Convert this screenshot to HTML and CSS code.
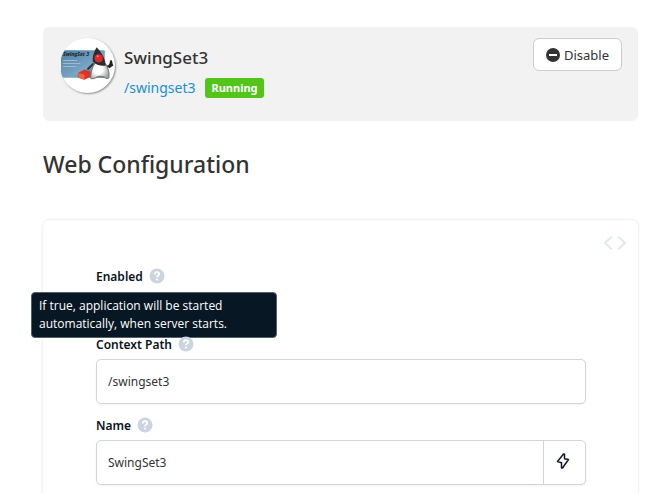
FILE: index.html
```
<!DOCTYPE html>
<html lang="en">
<head>
    <meta charset="UTF-8">
    <meta name="viewport" content="width=device-width, initial-scale=1.0">
    <title>SwingSet3 - Web Configuration</title>
    <link rel="stylesheet" href="styles.css">
</head>
<body>
    <!-- Application banner -->
    <header class="app-banner">
        <svg class="app-logo" viewBox="0 0 54 54" aria-hidden="true">
            <defs>
                <linearGradient id="cardBlue" x1="0" y1="0" x2="1" y2="1">
                    <stop offset="0" stop-color="#4a7da4"/>
                    <stop offset="0.6" stop-color="#7ba6c4"/>
                    <stop offset="1" stop-color="#3f6f95"/>
                </linearGradient>
                <radialGradient id="belly" cx="0.4" cy="0.5" r="0.6">
                    <stop offset="0.4" stop-color="#ffffff"/>
                    <stop offset="1" stop-color="#a5a5a5"/>
                </radialGradient>
            </defs>
            <rect x="1" y="12" width="43" height="27" rx="1" fill="url(#cardBlue)"/>
            <text class="logo-title" x="3" y="18">SwingSet 3</text>
            <path d="M3 22h14M3 25h17M3 28h13" stroke="#9dbdd2" stroke-width="1"/>
            <path d="M18 34l6-3 6 2v5l-6 3-6-2z" fill="#d9362b"/>
            <path d="M18 34l6 2v5l-6-2z" fill="#f0604c"/>
            <path d="M46 28q4 0 4-6M50 22l1 5M48 29l4-3" stroke="#222" stroke-width="2" fill="none"/>
            <path d="M33 25q-4 4-6 6" stroke="#333" stroke-width="2"/>
            <path d="M30 39q1-13 7-17 8 0 10 8 2 5 1 9-2 2-5-1-5-1-8 1-4 2-5 0z" fill="url(#belly)" stroke="#777" stroke-width="1"/>
            <path d="M36 9q-4 6-4 14 5 5 13 4-1-10-9-18z" fill="#2d2d30"/>
            <circle cx="38" cy="20" r="4" fill="#e5282c"/>
            <circle cx="37" cy="18" r="1" fill="#ff8078"/>
        </svg>
        <div class="app-info">
            <h2 class="app-name">SwingSet3</h2>
            <div class="app-status">
                <a class="app-link" href="/swingset3">/swingset3</a>
                <span class="badge">Running</span>
            </div>
        </div>
        <button class="btn-disable" type="button">
            <svg width="14" height="14" viewBox="0 0 14 14" aria-hidden="true">
                <circle cx="7" cy="7" r="7" fill="#333"/>
                <rect x="3" y="6" width="8" height="2" fill="#fff"/>
            </svg>
            Disable
        </button>
    </header>

    <h1 class="page-title">Web Configuration</h1>

    <!-- Configuration form -->
    <form class="config-card">
        <div class="card-toolbar">
            <button class="btn-source" type="button" aria-label="View source">
                <svg width="24" height="16" viewBox="0 0 24 16" aria-hidden="true">
                    <path d="M9 1.5L2 8l7 6.500M15 1.500L22 8l-7 6.500" fill="none" stroke="#e2e8f0" stroke-width="2"/>
                </svg>
            </button>
        </div>

        <div class="field field-enabled">
            <div class="field-label">
                <label for="enabled">Enabled</label>
                <svg class="help" viewBox="0 0 16 16" aria-hidden="true">
                    <circle cx="8" cy="8" r="7.500" fill="#cbd5e1"/>
                    <path d="M5.800 6.400q0-2.200 2.200-2.200 2.200 0 2.200 1.900 0 1.100-1.200 1.700-1 .5-1 1.500" fill="none" stroke="#fff" stroke-width="1.800"/>
                    <circle cx="8" cy="11.500" r="1.100" fill="#fff"/>
                </svg>
            </div>
            <input type="checkbox" id="enabled" class="check" checked>
            <div class="tooltip" role="tooltip">If true, application will be started automatically, when server starts.</div>
        </div>

        <div class="field">
            <div class="field-label">
                <label for="contextPath">Context Path</label>
                <svg class="help" viewBox="0 0 16 16" aria-hidden="true">
                    <circle cx="8" cy="8" r="7.500" fill="#cbd5e1"/>
                    <path d="M5.800 6.400q0-2.200 2.200-2.200 2.200 0 2.200 1.900 0 1.100-1.200 1.700-1 .5-1 1.500" fill="none" stroke="#fff" stroke-width="1.800"/>
                    <circle cx="8" cy="11.500" r="1.100" fill="#fff"/>
                </svg>
            </div>
            <div class="input-group">
                <input type="text" id="contextPath" class="text-input" value="/swingset3">
            </div>
        </div>

        <div class="field">
            <div class="field-label">
                <label for="appName">Name</label>
                <svg class="help" viewBox="0 0 16 16" aria-hidden="true">
                    <circle cx="8" cy="8" r="7.500" fill="#cbd5e1"/>
                    <path d="M5.800 6.400q0-2.200 2.200-2.200 2.200 0 2.200 1.900 0 1.100-1.200 1.700-1 .5-1 1.500" fill="none" stroke="#fff" stroke-width="1.800"/>
                    <circle cx="8" cy="11.500" r="1.100" fill="#fff"/>
                </svg>
            </div>
            <div class="input-group">
                <input type="text" id="appName" class="text-input" value="SwingSet3">
                <button class="btn-bolt" type="button" aria-label="Bind value">
                    <svg width="14" height="16" viewBox="0 0 14 16" aria-hidden="true">
                        <path d="M7.500 1L1.500 8.500 5.500 9.800 5.500 15 6.500 15 12.500 6.500 8.500 5.800 8.500 1z" fill="none" stroke="#0f1b2a" stroke-width="1.500" stroke-linejoin="round"/>
                    </svg>
                </button>
            </div>
        </div>
    </form>
</body>
</html>
```
FILE: styles.css
```
* {
    box-sizing: border-box;
}
body {
    display: flex;
    flex-direction: column;
    min-height: 100vh;
    margin: 0;
    padding: 27px 27px 0 43px;
    font-family: "Noto Sans", "Open Sans", sans-serif;
    font-size: 13px;
    color: #333;
    background-color: #fff;
}
button {
    font-family: inherit;
    cursor: pointer;
}

/* Application banner */
.app-banner {
    display: flex;
    align-items: flex-start;
    min-height: 94px;
    padding: 11px 16px 11px 17px;
    border-radius: 6px;
    background-color: #f2f2f2;
}
.app-logo {
    width: 55px;
    height: 55px;
    margin-right: 9px;
    border-radius: 50%;
    background-color: #fff;
    box-shadow: 1px 1px 2px rgba(0, 0, 0, 0.4);
}
.logo-title {
    font-size: 5px;
    font-weight: bold;
    font-style: italic;
    fill: #16222c;
}
.app-info {
    flex: 1;
    padding-top: 8px;
}
.app-name {
    margin: 0;
    font-size: 17px;
    font-weight: 500;
    line-height: 24px;
}
.app-status {
    display: flex;
    align-items: center;
    gap: 10px;
    margin-top: 6px;
}
.app-link {
    font-size: 14px;
    line-height: 24px;
    color: #1890cf;
    text-decoration: none;
}
.badge {
    padding: 0 6px;
    border-radius: 3px;
    font-size: 11px;
    font-weight: bold;
    line-height: 20px;
    color: #fff;
    background-color: #52c41a;
}
.btn-disable {
    display: flex;
    align-items: center;
    gap: 4px;
    height: 33px;
    padding: 0 12px;
    border: 1px solid #ccc;
    border-radius: 6px;
    font-size: 13px;
    color: #333;
    background-color: #fff;
}

.page-title {
    margin: 27px 0 40px;
    font-size: 23px;
    font-weight: 500;
    line-height: 32px;
}

/* Configuration form */
.config-card {
    flex: 1;
    padding: 12px 52px 8px 53px;
    border-radius: 6px 6px 0 0;
    box-shadow: 0 0 3px rgba(0, 0, 0, 0.14);
}
.card-toolbar {
    display: flex;
    justify-content: flex-end;
    margin-right: -41px;
}
.btn-source {
    display: flex;
    padding: 3px 0;
    border: 0;
    background: none;
}
.field {
    position: relative;
    margin-bottom: 11px;
}
.field-enabled {
    margin: 12px 0 22px;
}
.field-label {
    display: flex;
    align-items: center;
    gap: 6px;
    height: 20px;
    margin-bottom: 5px;
    font-size: 12px;
    font-weight: 600;
    color: #0a1420;
}
.help {
    width: 16px;
    height: 16px;
}
.check {
    display: block;
    width: 18px;
    height: 18px;
    margin: 8px 0 0;
}
.tooltip {
    position: absolute;
    top: 26px;
    left: -65px;
    width: 246px;
    padding: 4px 7px;
    border: 1px solid #52606d;
    border-radius: 4px;
    font-family: "Open Sans", "Noto Sans", sans-serif;
    font-size: 12px;
    line-height: 18px;
    color: #fff;
    background-color: #081724;
}
.input-group {
    display: flex;
    height: 45px;
    border: 1px solid #d1d5db;
    border-radius: 5px;
    background-color: #fff;
    box-shadow: 0 1px 2px rgba(0, 0, 0, 0.05);
}
.text-input {
    flex: 1;
    min-width: 0;
    padding: 0 11px;
    border: 0;
    font-family: inherit;
    font-size: 12px;
    color: #333;
    background: none;
}
.btn-bolt {
    display: flex;
    align-items: center;
    justify-content: center;
    width: 42px;
    padding: 0 4px 4px 0;
    border: 0;
    border-left: 1px solid #d1d5db;
    background: none;
}
```
